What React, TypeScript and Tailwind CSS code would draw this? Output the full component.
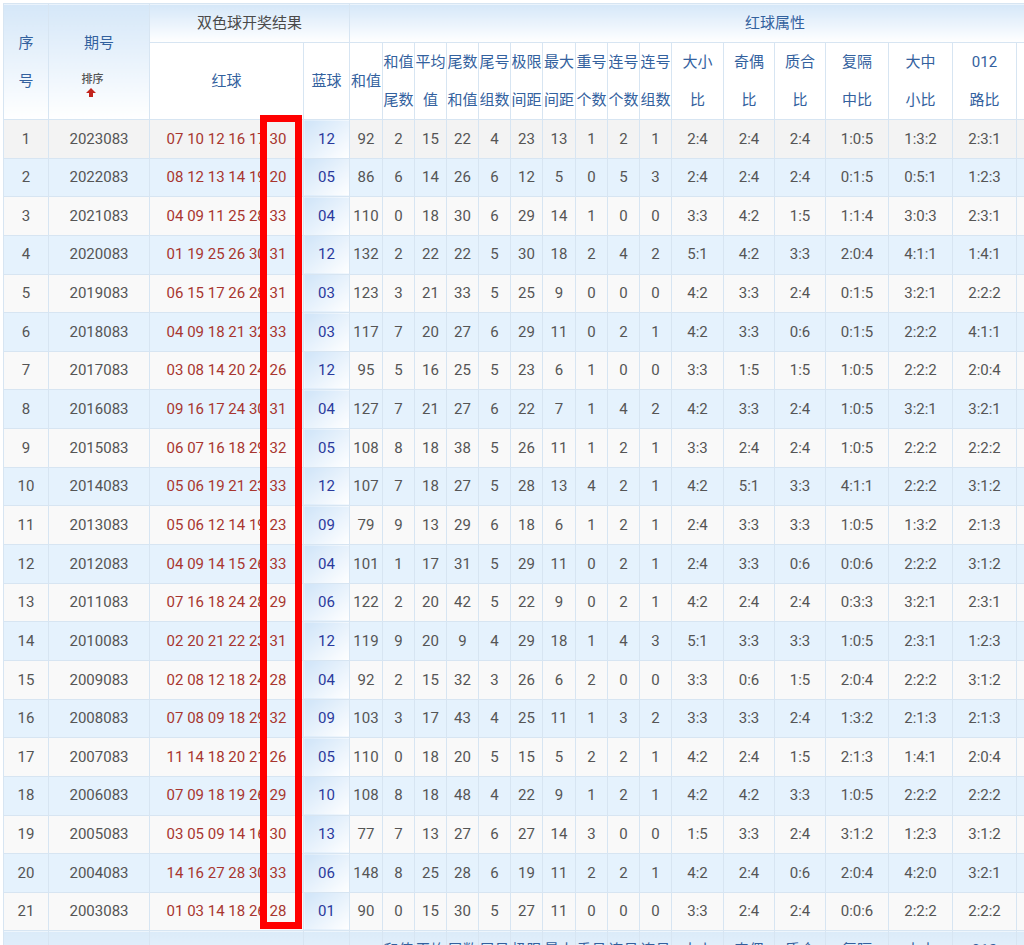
import React from "react";

const raw = [
  "2023083|07 10 12 16 17 30|12|92 2 15 22 4 23 13 1 2 1|2:4 2:4 2:4 1:0:5 1:3:2 2:3:1",
  "2022083|08 12 13 14 19 20|05|86 6 14 26 6 12 5 0 5 3|2:4 2:4 2:4 0:1:5 0:5:1 1:2:3",
  "2021083|04 09 11 25 28 33|04|110 0 18 30 6 29 14 1 0 0|3:3 4:2 1:5 1:1:4 3:0:3 2:3:1",
  "2020083|01 19 25 26 30 31|12|132 2 22 22 5 30 18 2 4 2|5:1 4:2 3:3 2:0:4 4:1:1 1:4:1",
  "2019083|06 15 17 26 28 31|03|123 3 21 33 5 25 9 0 0 0|4:2 3:3 2:4 0:1:5 3:2:1 2:2:2",
  "2018083|04 09 18 21 32 33|03|117 7 20 27 6 29 11 0 2 1|4:2 3:3 0:6 0:1:5 2:2:2 4:1:1",
  "2017083|03 08 14 20 24 26|12|95 5 16 25 5 23 6 1 0 0|3:3 1:5 1:5 1:0:5 2:2:2 2:0:4",
  "2016083|09 16 17 24 30 31|04|127 7 21 27 6 22 7 1 4 2|4:2 3:3 2:4 1:0:5 3:2:1 3:2:1",
  "2015083|06 07 16 18 29 32|05|108 8 18 38 5 26 11 1 2 1|3:3 2:4 2:4 1:0:5 2:2:2 2:2:2",
  "2014083|05 06 19 21 23 33|12|107 7 18 27 5 28 13 4 2 1|4:2 5:1 3:3 4:1:1 2:2:2 3:1:2",
  "2013083|05 06 12 14 19 23|09|79 9 13 29 6 18 6 1 2 1|2:4 3:3 3:3 1:0:5 1:3:2 2:1:3",
  "2012083|04 09 14 15 26 33|04|101 1 17 31 5 29 11 0 2 1|2:4 3:3 0:6 0:0:6 2:2:2 3:1:2",
  "2011083|07 16 18 24 28 29|06|122 2 20 42 5 22 9 0 2 1|4:2 2:4 2:4 0:3:3 3:2:1 2:3:1",
  "2010083|02 20 21 22 23 31|12|119 9 20 9 4 29 18 1 4 3|5:1 3:3 3:3 1:0:5 2:3:1 1:2:3",
  "2009083|02 08 12 18 24 28|04|92 2 15 32 3 26 6 2 0 0|3:3 0:6 1:5 2:0:4 2:2:2 3:1:2",
  "2008083|07 08 09 18 29 32|09|103 3 17 43 4 25 11 1 3 2|3:3 3:3 2:4 1:3:2 2:1:3 2:1:3",
  "2007083|11 14 18 20 21 26|05|110 0 18 20 5 15 5 2 2 1|4:2 2:4 1:5 2:1:3 1:4:1 2:0:4",
  "2006083|07 09 18 19 26 29|10|108 8 18 48 4 22 9 1 2 1|4:2 4:2 3:3 1:0:5 2:2:2 2:2:2",
  "2005083|03 05 09 14 16 30|13|77 7 13 27 6 27 14 3 0 0|1:5 3:3 2:4 3:1:2 1:2:3 3:1:2",
  "2004083|14 16 27 28 30 33|06|148 8 25 28 6 19 11 2 2 1|4:2 2:4 0:6 2:0:4 4:2:0 3:2:1",
  "2003083|01 03 14 18 26 28|01|90 0 15 30 5 27 11 0 0 0|3:3 2:4 2:4 0:0:6 2:2:2 2:2:2",
];

const rows = raw.map((line) => {
  const [issue, reds, blue, nums, ratios] = line.split("|");
  return { issue, reds, blue, nums: nums.split(" "), ratios: ratios.split(" ") };
});

const subHeads = [
  ["和值", "尾数"],
  ["平均", "值"],
  ["尾数", "和值"],
  ["尾号", "组数"],
  ["极限", "间距"],
  ["最大", "间距"],
  ["重号", "个数"],
  ["连号", "个数"],
  ["连号", "组数"],
  ["大小", "比"],
  ["奇偶", "比"],
  ["质合", "比"],
  ["复隔", "中比"],
  ["大中", "小比"],
  ["012", "路比"],
];

// columns past the right edge of the view, left empty
const offscreen = 2;

const cell = "border border-[#d7e5f2] p-0 text-center align-middle font-normal whitespace-nowrap";
const headBg = "bg-gradient-to-b from-[#d5e7f8] to-white";
const footBg = "bg-gradient-to-b from-[#dbebf9] to-white";

function SortArrow() {
  return (
    <svg width="10" height="9" viewBox="0 0 10 9" className="block">
      <path d="M5 0 L10 5 H7 V9 H3 V5 H0 Z" fill="#c2231c" />
    </svg>
  );
}

function TwoLine({ a, b }: { a: string; b: string }) {
  return (
    <>
      <div>{a}</div>
      <div>{b}</div>
    </>
  );
}

function Blank({ n, bg }: { n: number; bg: string }) {
  return (
    <>
      {Array.from({ length: n }).map((_, k) => (
        <th key={"x" + k} className={`${cell} ${bg}`} />
      ))}
    </>
  );
}

export default function App() {
  return (
    <div className="relative w-[1024px] h-[945px] overflow-hidden bg-white pt-[3px] pl-[3px] font-['Roboto','Noto_Sans_CJK_SC',sans-serif]">
      <table className="table-fixed border-collapse w-[1194px] text-[15px]">
        <colgroup>
          <col className="w-[45px]" />
          <col className="w-[101px]" />
          <col className="w-[154px]" />
          <col className="w-[46px]" />
          <col className="w-[33px]" />
          <col className="w-[32px]" />
          <col className="w-[32px]" />
          <col className="w-[32px]" />
          <col className="w-[32px]" />
          <col className="w-[32px]" />
          <col className="w-[33px]" />
          <col className="w-[32px]" />
          <col className="w-[32px]" />
          <col className="w-[32px]" />
          <col className="w-[52px]" />
          <col className="w-[51px]" />
          <col className="w-[51px]" />
          <col className="w-[63px]" />
          <col className="w-[64px]" />
          <col className="w-[64px]" />
          <col className="w-[90px]" />
          <col className="w-[91px]" />
        </colgroup>
        <thead className="text-[#33619e] leading-[38px]">
          <tr className="h-[38px]">
            <th rowSpan={2} className={`${cell} ${headBg}`}>
              <TwoLine a="序" b="号" />
            </th>
            <th rowSpan={2} className={`${cell} ${headBg}`}>
              <div className="flex flex-col items-center">
                <div>期号</div>
                <div className="pr-[13px] pb-[3px] flex flex-col items-center">
                  <div className="text-[11px] leading-[14px] mt-[11px] text-[#555] font-medium">排序</div>
                  <div className="mt-[1px] mr-[3px]">
                    <SortArrow />
                  </div>
                </div>
              </div>
            </th>
            <th colSpan={2} className={`${cell} ${headBg} text-[#4a4a4a]`}>双色球开奖结果</th>
            <th colSpan={18} className={`${cell} ${headBg} text-left`}>
              <span className="pl-[395px]">红球属性</span>
            </th>
          </tr>
          <tr className="h-[76px]">
            <th className={`${cell} bg-white`}>红球</th>
            <th className={`${cell} bg-white`}>蓝球</th>
            <th className={`${cell} bg-white`}>和值</th>
            {subHeads.map(([a, b]) => (
              <th key={a + b} className={`${cell} bg-white`}>
                <TwoLine a={a} b={b} />
              </th>
            ))}
            <Blank n={offscreen} bg="bg-white" />
          </tr>
        </thead>
        <tbody className="text-[#555]">
          {rows.map((r, i) => {
            const bg = i % 2 === 1 ? "bg-[#e5f2fd]" : i === 0 ? "bg-[#f3f3f3]" : "bg-[#f9f9f9]";
            return (
              <tr key={r.issue} className={`h-[38.65px] ${bg}`}>
                <td className={cell}>{i + 1}</td>
                <td className={cell}>{r.issue}</td>
                <td className={`${cell} text-[#a8362f]`}>{r.reds}</td>
                <td className={`${cell} text-[#2b3a9c] bg-gradient-to-br from-[#cfe4f8] to-white`}>{r.blue}</td>
                {r.nums.map((n, k) => (
                  <td key={k} className={cell}>{n}</td>
                ))}
                {r.ratios.map((n, k) => (
                  <td key={"r" + k} className={cell}>{n}</td>
                ))}
                <td className={cell} />
                <td className={cell} />
              </tr>
            );
          })}
        </tbody>
        <tfoot className="text-[#33619e] leading-[38px]">
          <tr className="h-[76px]">
            <th rowSpan={2} className={`${cell} ${footBg}`}>
              <TwoLine a="序" b="号" />
            </th>
            <th rowSpan={2} className={`${cell} ${footBg}`}>期号</th>
            <th className={`${cell} ${footBg}`}>红球</th>
            <th className={`${cell} ${footBg}`}>蓝球</th>
            <th className={`${cell} ${footBg}`}>和值</th>
            {subHeads.map(([a, b]) => (
              <th key={a + b} className={`${cell} ${footBg}`}>
                <TwoLine a={a} b={b} />
              </th>
            ))}
            <Blank n={offscreen} bg={footBg} />
          </tr>
          <tr className="h-[38px]">
            <th colSpan={2} className={`${cell} bg-white text-[#4a4a4a]`}>双色球开奖结果</th>
            <th colSpan={18} className={`${cell} bg-white`}>红球属性</th>
          </tr>
        </tfoot>
      </table>

      <div className="absolute left-[260px] top-[115px] w-[42px] h-[814px] border-[7px] border-[#ff0000]" />
    </div>
  );
}
